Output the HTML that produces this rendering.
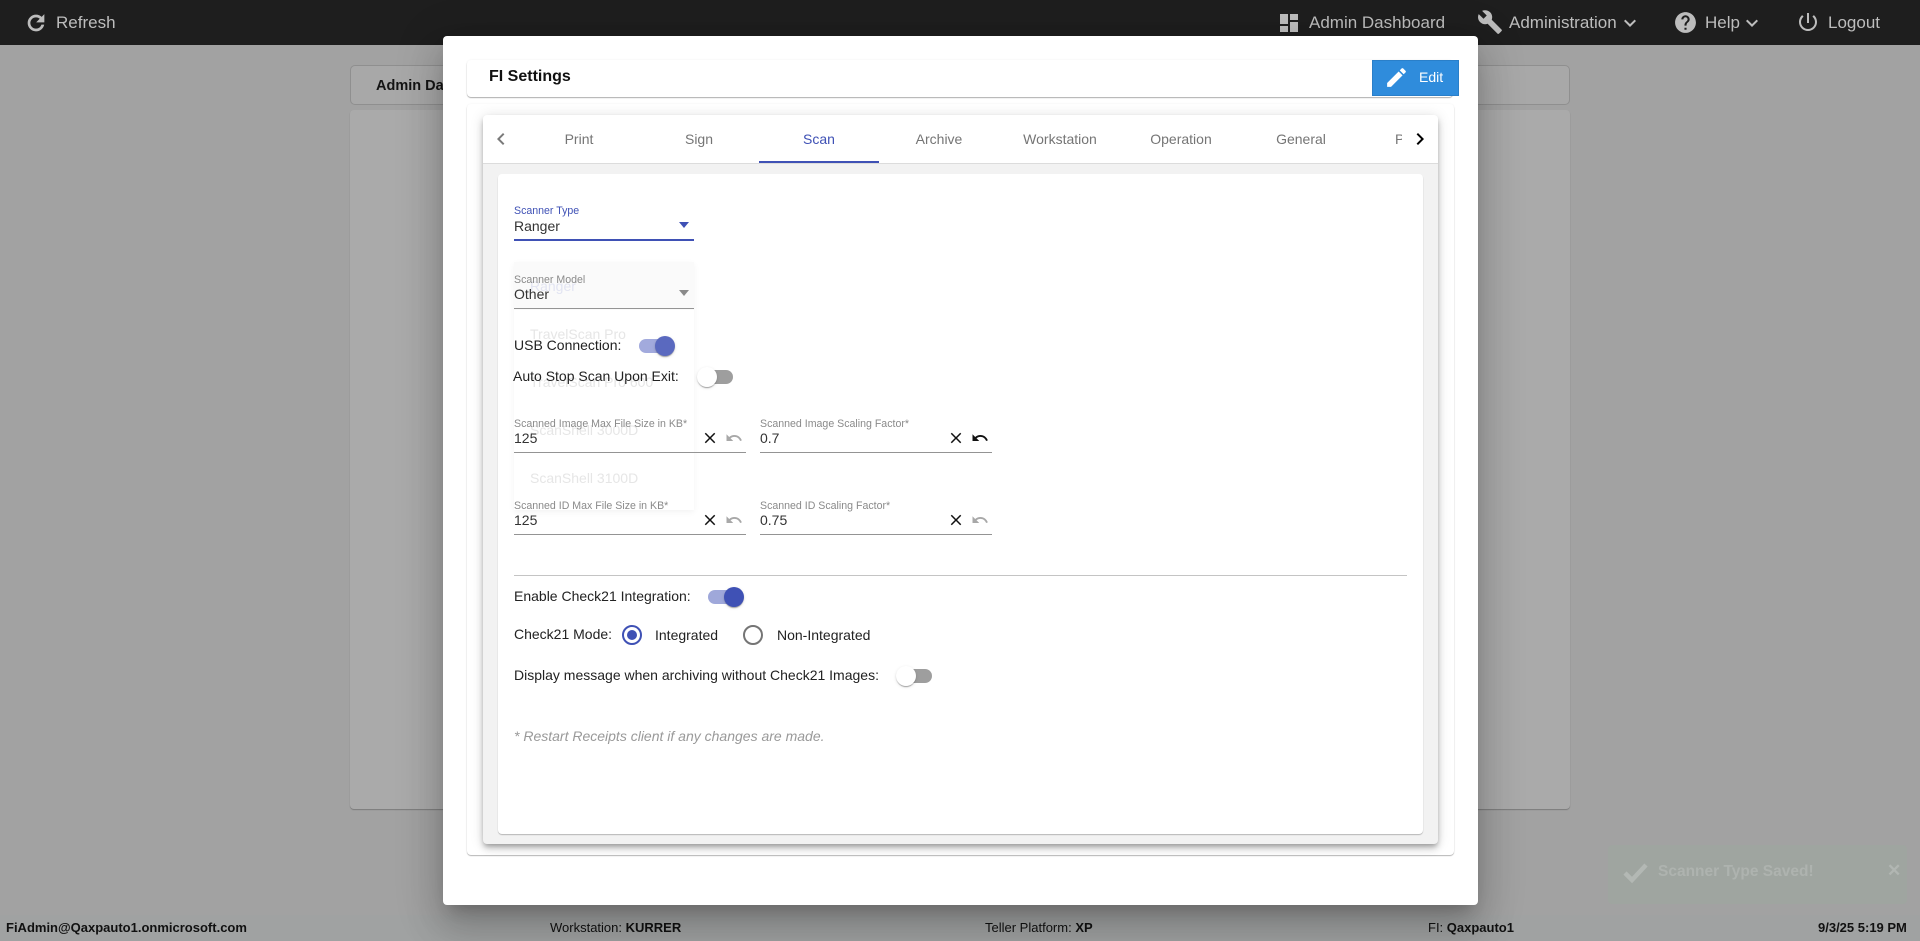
<!DOCTYPE html>
<html><head><meta charset="utf-8"><style>
html,body{margin:0;padding:0}
body{position:relative;width:1920px;height:941px;overflow:hidden;background:#a2a2a2;font-family:"Liberation Sans",sans-serif;color:#222}
div,svg,span.a{position:absolute}
svg{display:block}
.t{position:absolute;white-space:nowrap;line-height:20px;height:20px}
.nav{color:#bdbdbd;font-size:17px}
.tab{color:#757575;font-size:14px;width:120px;text-align:center;top:129px}
.lab{color:#8a8a8a;font-size:10.6px}
.val{color:#333;font-size:14px}
.line{height:1px;background:#949494}
.ghost{color:#e6e6e6;font-size:14px;left:530px}
.foot{color:#111;font-size:13px;top:918px}
.foot b{font-weight:bold}
.body{color:#222;font-size:14px}
.track{height:14px;border-radius:7px}
.thumb{width:20px;height:20px;border-radius:50%;box-shadow:0 2px 1px -1px rgba(0,0,0,.2),0 1px 1px 0 rgba(0,0,0,.14),0 1px 3px 0 rgba(0,0,0,.12)}
</style></head><body>

<div style="left:0;top:0;width:1920px;height:45px;background:#1e1e1e"></div>
<svg style="left:24px;top:11px" width="24" height="24" viewBox="0 0 24 24" fill="#bdbdbd" stroke="#bdbdbd" stroke-width=".7"><path d="M17.65 6.35C16.2 4.9 14.21 4 12 4c-4.42 0-7.99 3.58-7.99 8s3.57 8 7.99 8c3.73 0 6.84-2.55 7.73-6h-2.08c-.82 2.33-3.04 4-5.65 4-3.31 0-6-2.69-6-6s2.69-6 6-6c1.66 0 3.14.69 4.22 1.78L13 11h7V4l-2.35 2.35z"/></svg>
<span class="t nav" style="left:56px;top:13px">Refresh</span>

<svg style="left:1277px;top:11px" width="24" height="24" viewBox="0 0 24 24" fill="#bdbdbd"><path d="M3 13h8V3H3v10zm0 8h8v-6H3v6zm10 0h8V11h-8v10zm0-18v6h8V3h-8z"/></svg>
<span class="t nav" style="left:1309px;top:13px">Admin Dashboard</span>
<svg style="left:1477px;top:9px" width="26" height="26" viewBox="0 0 24 24" fill="#bdbdbd"><path d="M22.7 19l-9.1-9.1c.9-2.3.4-5-1.5-6.9-2-2-5-2.4-7.4-1.3L9 6 6 9 1.6 4.7C.4 7.1.9 10.1 2.9 12.1c1.9 1.9 4.6 2.4 6.9 1.5l9.1 9.1c.4.4 1 .4 1.4 0l2.3-2.3c.5-.4.5-1.1.1-1.4z"/></svg>
<span class="t nav" style="left:1509px;top:13px">Administration</span>
<svg style="left:1618px;top:11px" width="24" height="24" viewBox="0 0 24 24" fill="#bdbdbd"><path d="M7.41 8.59L12 13.17l4.59-4.58L18 10l-6 6-6-6z"/></svg>
<svg style="left:1673px;top:10px" width="25" height="25" viewBox="0 0 24 24" fill="#bdbdbd"><path d="M12 2C6.48 2 2 6.48 2 12s4.48 10 10 10 10-4.48 10-10S17.52 2 12 2zm1 17h-2v-2h2v2zm2.07-7.75l-.9.92C13.45 12.9 13 13.5 13 15h-2v-.5c0-1.1.45-2.1 1.17-2.83l1.24-1.26c.37-.36.59-.86.59-1.41 0-1.1-.9-2-2-2s-2 .9-2 2H8c0-2.21 1.79-4 4-4s4 1.79 4 4c0 .88-.36 1.68-.93 2.25z"/></svg>
<span class="t nav" style="left:1705px;top:13px">Help</span>
<svg style="left:1740px;top:11px" width="24" height="24" viewBox="0 0 24 24" fill="#bdbdbd"><path d="M7.41 8.59L12 13.17l4.59-4.58L18 10l-6 6-6-6z"/></svg>
<svg style="left:1796px;top:10px" width="24" height="24" viewBox="0 0 24 24" fill="#bdbdbd"><path d="M13 3h-2v10h2V3zm4.83 2.17l-1.42 1.42C17.99 7.86 19 9.81 19 12c0 3.87-3.13 7-7 7s-7-3.13-7-7c0-2.19 1.01-4.14 2.58-5.42L6.17 5.17C4.23 6.82 3 9.26 3 12c0 4.97 4.03 9 9 9s9-4.03 9-9c0-2.74-1.23-5.18-3.17-6.83z"/></svg>
<span class="t nav" style="left:1828px;top:13px">Logout</span>

<div style="left:350px;top:65px;width:1218px;height:38px;border:1px solid #8f8f8f;border-radius:5px;background:#a8a8a8"></div>
<span class="t" style="left:376px;top:76px;font-size:14.5px;font-weight:bold;color:#141414">Admin Dashboard</span>
<div style="left:350px;top:110px;width:1220px;height:699px;border-radius:4px;background:#aaa;box-shadow:0 1px 1px rgba(0,0,0,.25)"></div>

<div style="left:0;top:915px;width:1920px;height:26px;background:#a0a2a2"></div>
<span class="t foot" style="left:6px"><b>FiAdmin@Qaxpauto1.onmicrosoft.com</b></span>
<span class="t foot" style="left:550px">Workstation: <b>KURRER</b></span>
<span class="t foot" style="left:985px">Teller Platform: <b>XP</b></span>
<span class="t foot" style="left:1428px">FI: <b>Qaxpauto1</b></span>
<span class="t foot" style="left:1818px"><b>9/3/25 5:19 PM</b></span>

<div style="left:1608px;top:845px;width:299px;height:59px;border-radius:4px;background:#9fa5a0"></div>
<svg style="left:1621px;top:858px" width="28" height="28" viewBox="0 0 28 28"><path d="M4 15l7 7L25 7" fill="none" stroke="#b3b8b4" stroke-width="4.5"/></svg>
<span class="t" style="left:1658px;top:862px;font-size:15.5px;font-weight:bold;color:#aeb3af">Scanner Type Saved!</span>
<span class="t" style="left:1887px;top:861px;font-size:17px;font-weight:bold;color:#b1b6b2">✕</span>

<!-- modal -->
<div style="left:443px;top:36px;width:1035px;height:869px;background:#fff;border-radius:4px;box-shadow:0 11px 15px -7px rgba(0,0,0,.2),0 24px 38px 3px rgba(0,0,0,.14),0 9px 46px 8px rgba(0,0,0,.12)"></div>

<div style="left:467px;top:60px;width:986px;height:37px;background:#fff;border-radius:4px;box-shadow:0 1px 1px rgba(0,0,0,.3),0 0 2px rgba(0,0,0,.06)"></div>
<span class="t" style="left:489px;top:67px;font-size:16px;font-weight:bold;color:#111">FI Settings</span>
<div style="left:1372px;top:60px;width:87px;height:36px;background:#2f8cdc;box-shadow:inset 0 0 0 1px #2a7fc9"></div>
<svg style="left:1384px;top:65px" width="25" height="25" viewBox="0 0 24 24" fill="#fff"><path d="M3 17.25V21h3.75L17.81 9.94l-3.75-3.75L3 17.25zM20.71 7.04c.39-.39.39-1.02 0-1.41l-2.34-2.34c-.39-.39-1.02-.39-1.41 0l-1.83 1.83 3.75 3.75 1.83-1.83z"/></svg>
<span class="t" style="left:1419px;top:67px;font-size:14px;color:#fff">Edit</span>

<div style="left:467px;top:104px;width:987px;height:751px;background:#fff;border-radius:4px;box-shadow:0 1px 1px rgba(0,0,0,.28),0 0 2px rgba(0,0,0,.05)"></div>
<div style="left:483px;top:115px;width:955px;height:729px;background:#f2f2f2;border-radius:4px;box-shadow:0 3px 5px -1px rgba(0,0,0,.25),0 5px 8px 0 rgba(0,0,0,.14),0 1px 14px 0 rgba(0,0,0,.12)"></div>
<div style="left:483px;top:115px;width:955px;height:48px;background:#fff;border-bottom:1px solid #dcdcdc;border-radius:4px 4px 0 0"></div>
<svg style="left:489px;top:127px" width="24" height="24" viewBox="0 0 24 24" fill="#7a7a7a"><path d="M15.41 7.41L14 6l-6 6 6 6 1.41-1.41L10.83 12z"/></svg>
<span class="t tab" style="left:519px">Print</span>
<span class="t tab" style="left:639px">Sign</span>
<span class="t tab" style="left:759px;color:#3f51b5">Scan</span>
<span class="t tab" style="left:879px">Archive</span>
<span class="t tab" style="left:1000px">Workstation</span>
<span class="t tab" style="left:1121px">Operation</span>
<span class="t tab" style="left:1241px">General</span>
<div style="left:1395px;top:129px;width:7px;height:20px;overflow:hidden"><span class="t" style="left:0;top:0;font-size:14px;color:#757575">Printers</span></div>
<svg style="left:1408px;top:127px" width="24" height="24" viewBox="0 0 24 24" fill="#000"><path d="M10 6L8.59 7.41 13.17 12l-4.58 4.59L10 18l6-6z"/></svg>
<div style="left:759px;top:161px;width:120px;height:2px;background:#3f51b5"></div>

<div style="left:498px;top:174px;width:925px;height:660px;background:#fff;border-radius:4px;box-shadow:0 1px 1px rgba(0,0,0,.25)"></div>

<!-- scanner type -->
<span class="t" style="left:514px;top:201px;font-size:10.6px;color:#3f51b5">Scanner Type</span>
<span class="t val" style="left:514px;top:216px">Ranger</span>
<svg style="left:678px;top:222px" width="12" height="6"><path d="M1 0h10L6 6z" fill="#3f51b5"/></svg>
<div style="left:514px;top:239px;width:180px;height:2px;background:#3f51b5"></div>

<!-- fading panel -->
<div style="left:514px;top:262px;width:180px;height:248px;background:#fff;box-shadow:0 2px 6px rgba(0,0,0,.05)"></div>
<div style="left:514px;top:262px;width:180px;height:48px;background:#fafafa"></div>
<span class="t ghost" style="top:276px;color:#e2e4f2">Ranger</span>
<span class="t ghost" style="top:324px">TravelScan Pro</span>
<span class="t ghost" style="top:372px">TravelScan Pro 600</span>
<span class="t ghost" style="top:420px">ScanShell 3000D</span>
<span class="t ghost" style="top:468px">ScanShell 3100D</span>

<!-- scanner model -->
<span class="t" style="left:514px;top:270px;font-size:10.6px;color:#8a8a8a">Scanner Model</span>
<span class="t val" style="left:514px;top:284px">Other</span>
<svg style="left:678px;top:290px" width="12" height="6"><path d="M1 0h10L6 6z" fill="#8a8a8a"/></svg>
<div class="line" style="left:514px;top:308px;width:180px"></div>

<span class="t body" style="left:514px;top:335px">USB Connection:</span>
<div class="track" style="left:639px;top:339px;width:34px;background:#a2aadd"></div>
<div class="thumb" style="left:655px;top:336px;background:#5a69bf"></div>

<span class="t body" style="left:513px;top:366px">Auto Stop Scan Upon Exit:</span>
<div class="track" style="left:699px;top:370px;width:34px;background:#9e9e9e"></div>
<div class="thumb" style="left:697px;top:367px;background:#fff"></div>

<!-- image row -->
<span class="t lab" style="left:514px;top:414px">Scanned Image Max File Size in KB*</span>
<span class="t val" style="left:514px;top:428px">125</span>
<div class="line" style="left:514px;top:452px;width:232px"></div>
<svg style="left:701px;top:429px" width="18" height="18" viewBox="0 0 24 24" fill="#111"><path d="M19 6.41L17.59 5 12 10.59 6.41 5 5 6.41 10.59 12 5 17.59 6.41 19 12 13.41 17.59 19 19 17.59 13.41 12z"/></svg>
<svg style="left:725px;top:429px" width="18" height="18" viewBox="0 0 24 24" fill="#a8a8a8"><path d="M12.5 8c-2.65 0-5.05.99-6.9 2.6L2 7v9h9l-3.62-3.62c1.39-1.16 3.16-1.88 5.12-1.88 3.54 0 6.55 2.31 7.6 5.5l2.37-.78C21.08 11.03 17.15 8 12.5 8z"/></svg>

<span class="t lab" style="left:760px;top:414px">Scanned Image Scaling Factor*</span>
<span class="t val" style="left:760px;top:428px">0.7</span>
<div class="line" style="left:760px;top:452px;width:232px"></div>
<svg style="left:947px;top:429px" width="18" height="18" viewBox="0 0 24 24" fill="#111"><path d="M19 6.41L17.59 5 12 10.59 6.41 5 5 6.41 10.59 12 5 17.59 6.41 19 12 13.41 17.59 19 19 17.59 13.41 12z"/></svg>
<svg style="left:971px;top:429px" width="18" height="18" viewBox="0 0 24 24" fill="#111"><path d="M12.5 8c-2.65 0-5.05.99-6.9 2.6L2 7v9h9l-3.62-3.62c1.39-1.16 3.16-1.88 5.12-1.88 3.54 0 6.55 2.31 7.6 5.5l2.37-.78C21.08 11.03 17.15 8 12.5 8z"/></svg>

<!-- id row -->
<span class="t lab" style="left:514px;top:496px">Scanned ID Max File Size in KB*</span>
<span class="t val" style="left:514px;top:510px">125</span>
<div class="line" style="left:514px;top:534px;width:232px"></div>
<svg style="left:701px;top:511px" width="18" height="18" viewBox="0 0 24 24" fill="#111"><path d="M19 6.41L17.59 5 12 10.59 6.41 5 5 6.41 10.59 12 5 17.59 6.41 19 12 13.41 17.59 19 19 17.59 13.41 12z"/></svg>
<svg style="left:725px;top:511px" width="18" height="18" viewBox="0 0 24 24" fill="#a8a8a8"><path d="M12.5 8c-2.65 0-5.05.99-6.9 2.6L2 7v9h9l-3.62-3.62c1.39-1.16 3.16-1.88 5.12-1.88 3.54 0 6.55 2.31 7.6 5.5l2.37-.78C21.08 11.03 17.15 8 12.5 8z"/></svg>

<span class="t lab" style="left:760px;top:496px">Scanned ID Scaling Factor*</span>
<span class="t val" style="left:760px;top:510px">0.75</span>
<div class="line" style="left:760px;top:534px;width:232px"></div>
<svg style="left:947px;top:511px" width="18" height="18" viewBox="0 0 24 24" fill="#111"><path d="M19 6.41L17.59 5 12 10.59 6.41 5 5 6.41 10.59 12 5 17.59 6.41 19 12 13.41 17.59 19 19 17.59 13.41 12z"/></svg>
<svg style="left:971px;top:511px" width="18" height="18" viewBox="0 0 24 24" fill="#a8a8a8"><path d="M12.5 8c-2.65 0-5.05.99-6.9 2.6L2 7v9h9l-3.62-3.62c1.39-1.16 3.16-1.88 5.12-1.88 3.54 0 6.55 2.31 7.6 5.5l2.37-.78C21.08 11.03 17.15 8 12.5 8z"/></svg>

<div style="left:514px;top:575px;width:893px;height:1px;background:#c4c4c4"></div>

<span class="t body" style="left:514px;top:586px">Enable Check21 Integration:</span>
<div class="track" style="left:708px;top:590px;width:34px;background:#9fa8da"></div>
<div class="thumb" style="left:724px;top:587px;background:#3f51b5"></div>

<span class="t body" style="left:514px;top:624px">Check21 Mode:</span>
<div style="left:622px;top:625px;width:16px;height:16px;border:2px solid #3f51b5;border-radius:50%"></div>
<div style="left:627px;top:630px;width:10px;height:10px;background:#3f51b5;border-radius:50%"></div>
<span class="t body" style="left:655px;top:625px">Integrated</span>
<div style="left:743px;top:625px;width:16px;height:16px;border:2px solid #757575;border-radius:50%"></div>
<span class="t body" style="left:777px;top:625px">Non-Integrated</span>

<span class="t body" style="left:514px;top:665px">Display message when archiving without Check21 Images:</span>
<div class="track" style="left:898px;top:669px;width:34px;background:#9e9e9e"></div>
<div class="thumb" style="left:896px;top:666px;background:#fff"></div>

<span class="t" style="left:514px;top:726px;font-size:14px;font-style:italic;color:#999">* Restart Receipts client if any changes are made.</span>

</body></html>
